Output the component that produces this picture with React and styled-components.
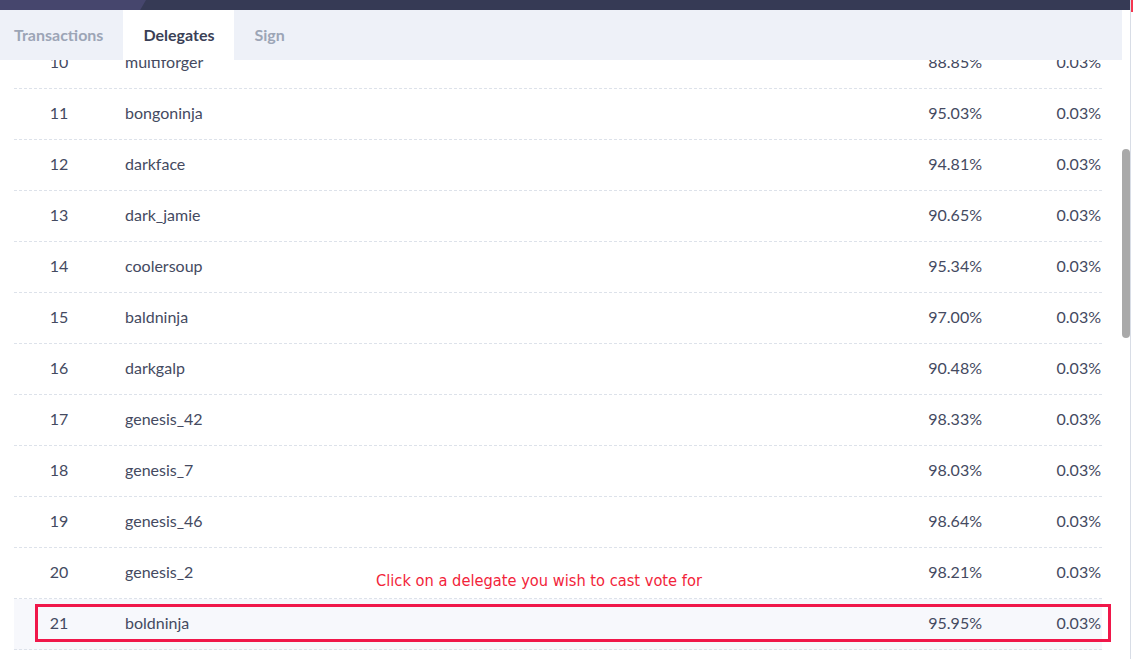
import React from 'react';
import styled, { createGlobalStyle } from 'styled-components';

const GlobalStyle = createGlobalStyle`
  html, body {
    margin: 0;
    padding: 0;
    background: #ffffff;
    overflow: hidden;
  }
  body {
    font-family: Lato, "Open Sans", sans-serif;
  }
`;

const Page = styled.div`
  display: flex;
  width: 1137px;
  height: 659px;
  overflow: hidden;
`;

const Window = styled.div`
  position: relative;
  display: flex;
  flex-direction: column;
  width: 1130px;
  height: 659px;
  border-right: 1px solid #d8dde6;
`;

const TopBar = styled.div`
  position: relative;
  height: 10px;
  flex: none;
  background: #363a55;
  overflow: hidden;
`;

const TopBarAccent = styled.div`
  width: 146px;
  height: 10px;
  background: #46466d;
  clip-path: polygon(0 0, 100% 0, 96% 100%, 0 100%);
`;

const Body = styled.div`
  display: flex;
  flex: 1;
  min-height: 0;
`;

const Panel = styled.div`
  display: flex;
  flex-direction: column;
  width: 1122px;
  min-height: 0;
`;

const TabList = styled.div`
  display: flex;
  height: 50px;
  flex: none;
  background: #eef1f8;
`;

const Tab = styled.div`
  display: flex;
  align-items: center;
  padding: 0 20px 2px;
  font-size: 16px;
  font-weight: 700;
  color: ${(p) => (p.$active ? '#3a3f56' : '#9ca5b6')};
  background: ${(p) => (p.$active ? '#ffffff' : 'transparent')};

  &:first-child {
    padding-left: 14px;
  }
`;

const Viewport = styled.div`
  flex: 1;
  min-height: 0;
  overflow: hidden;
  padding: 0 20px 0 14px;
`;

const Table = styled.div`
  margin-top: -22px;
`;

const Row = styled.div`
  display: grid;
  grid-template-columns: 90px 1fr 120px 120px;
  align-items: center;
  height: 51px;
  box-sizing: border-box;
  padding-bottom: 3px;
  border-bottom: 1px dashed #dde2ea;
  background: ${(p) => (p.$selected ? '#f7f8fc' : 'transparent')};
  color: #444a61;
  font-size: 16px;
`;

const Rank = styled.div`
  text-align: center;
`;

const Name = styled.div`
  padding-left: 21px;
`;

const Percent = styled.div`
  text-align: right;
  padding-right: ${(p) => (p.$last ? '1px' : '0')};
`;

const ScrollTrack = styled.div`
  display: flex;
  flex-direction: column;
  width: 8px;
  background: #ffffff;
`;

const ScrollThumb = styled.div`
  margin-top: 139px;
  height: 189px;
  border-radius: 4px;
  background: #a9a9a9;
`;

const Edge = styled.div`
  flex: 1;
  display: flex;
  flex-direction: column;
`;

const EdgeMark = styled.div`
  width: 2px;
  height: 12px;
  background: #f5364f;
`;

const Hint = styled.div`
  position: absolute;
  left: 376px;
  top: 571px;
  font-family: "Liberation Sans Narrow", "DejaVu Sans Condensed", "Liberation Sans", sans-serif;
  font-size: 16.3px;
  line-height: 20px;
  color: #f2243a;
  white-space: nowrap;
`;

const Highlight = styled.div`
  position: absolute;
  left: 35px;
  top: 604px;
  width: 1076px;
  height: 38px;
  box-sizing: border-box;
  border: 3px solid #f0174a;
`;

const delegates = [
  { rank: 10, name: 'multiforger', productivity: '88.85%', approval: '0.03%' },
  { rank: 11, name: 'bongoninja', productivity: '95.03%', approval: '0.03%' },
  { rank: 12, name: 'darkface', productivity: '94.81%', approval: '0.03%' },
  { rank: 13, name: 'dark_jamie', productivity: '90.65%', approval: '0.03%' },
  { rank: 14, name: 'coolersoup', productivity: '95.34%', approval: '0.03%' },
  { rank: 15, name: 'baldninja', productivity: '97.00%', approval: '0.03%' },
  { rank: 16, name: 'darkgalp', productivity: '90.48%', approval: '0.03%' },
  { rank: 17, name: 'genesis_42', productivity: '98.33%', approval: '0.03%' },
  { rank: 18, name: 'genesis_7', productivity: '98.03%', approval: '0.03%' },
  { rank: 19, name: 'genesis_46', productivity: '98.64%', approval: '0.03%' },
  { rank: 20, name: 'genesis_2', productivity: '98.21%', approval: '0.03%' },
  { rank: 21, name: 'boldninja', productivity: '95.95%', approval: '0.03%' },
  { rank: 22, name: 'genesis_11', productivity: '98.12%', approval: '0.03%' },
];

const App = () => {
  return (
    <>
      <GlobalStyle />
      <Page>
        <Window>
          <TopBar>
            <TopBarAccent />
          </TopBar>
          <Body>
            <Panel>
              <TabList>
                <Tab>Transactions</Tab>
                <Tab $active>Delegates</Tab>
                <Tab>Sign</Tab>
              </TabList>
              <Viewport>
                <Table>
                  {delegates.map((d) => (
                    <Row key={d.rank} $selected={d.rank === 21}>
                      <Rank>{d.rank}</Rank>
                      <Name>{d.name}</Name>
                      <Percent>{d.productivity}</Percent>
                      <Percent $last>{d.approval}</Percent>
                    </Row>
                  ))}
                </Table>
              </Viewport>
            </Panel>
            <ScrollTrack>
              <ScrollThumb />
            </ScrollTrack>
          </Body>
          <Hint>Click on a delegate you wish to cast vote for</Hint>
          <Highlight />
        </Window>
        <Edge>
          <EdgeMark />
        </Edge>
      </Page>
    </>
  );
};

export default App;
